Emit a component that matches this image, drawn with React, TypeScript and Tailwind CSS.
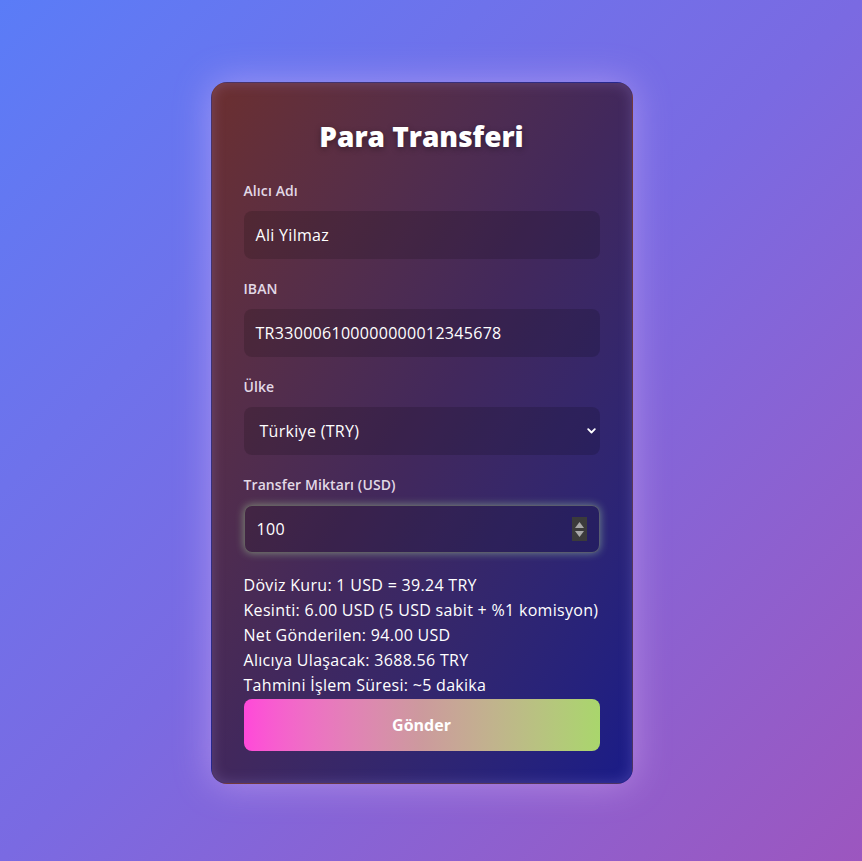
import React from "react";

const font = { fontFamily: '"Open Sans", "Noto Sans", sans-serif' };

function Label({ children }: { children: React.ReactNode }) {
  return <div className="mb-[10px] h-5 text-[14px] font-semibold leading-5 tracking-[0.1px] text-[#e2d9e6]">{children}</div>;
}

function Field({ label, children }: { label: string; children: React.ReactNode }) {
  return (
    <div className="mb-5">
      <Label>{label}</Label>
      {children}
    </div>
  );
}

export default function App() {
  return (
    <div
      className="flex min-h-[861px] w-full items-start justify-center bg-gradient-to-br from-[#5a7cf7] via-[#7a6ae2] to-[#9c56bf] pr-[19px] pt-[82px]"
      style={font}
    >
      <div className="w-[422px] rounded-2xl border border-white/5 bg-gradient-to-br from-[#6c2f2f] via-[#42285c] to-[#1a1b88] px-8 pb-8 pt-8 shadow-[0_0_36px_rgba(240,200,255,0.4),inset_0_0_14px_rgba(190,170,255,0.22)]">
        <h1 className="mb-6 text-center text-[28px] font-extrabold leading-[42px] text-white [text-shadow:0_2px_6px_rgba(0,0,0,0.35)]">
          Para Transferi
        </h1>

        <Field label="Alıcı Adı">
          <div className="flex h-12 items-center rounded-lg bg-black/15 px-3 text-base tracking-[0.3px] text-white">Ali Yilmaz</div>
        </Field>

        <Field label="IBAN">
          <div className="flex h-12 items-center rounded-lg bg-black/15 px-3 text-base tracking-[0.3px] text-white">
            TR330006100000000012345678
          </div>
        </Field>

        <Field label="Ülke">
          <div className="flex h-12 items-center justify-between rounded-lg bg-black/15 pl-4 pr-1 text-base tracking-[0.3px] text-white">
            <span>Türkiye (TRY)</span>
            <svg width="9" height="6" viewBox="0 0 9 6" fill="none">
              <path d="M1.2 1.2 L4.5 4.5 L7.8 1.2" stroke="white" strokeWidth="1.8" strokeLinecap="round" strokeLinejoin="round" />
            </svg>
          </div>
        </Field>

        <div>
          <Label>Transfer Miktarı (USD)</Label>
          <div className="flex h-12 items-center justify-between rounded-lg border border-[#8a9a80]/50 bg-black/15 pl-3 pr-3 text-base tracking-[0.3px] text-white shadow-[0_0_8px_rgba(190,255,170,0.45)]">
            <span>100</span>
            <div className="flex h-6 w-[15px] flex-col items-center justify-center gap-[3px] bg-[#3b3b3b]">
              <svg width="9" height="6" viewBox="0 0 9 6">
                <path d="M4.5 0 L9 6 L0 6 Z" fill="#a8a8a8" />
              </svg>
              <svg width="9" height="6" viewBox="0 0 9 6">
                <path d="M0 0 L9 0 L4.5 6 Z" fill="#a8a8a8" />
              </svg>
            </div>
          </div>
        </div>

        <div className="mt-5 text-base leading-[25px] tracking-[0.3px] text-white">
          <div>Döviz Kuru: 1 USD = 39.24 TRY</div>
          <div>Kesinti: 6.00 USD (5 USD sabit + %1 komisyon)</div>
          <div>Net Gönderilen: 94.00 USD</div>
          <div>Alıcıya Ulaşacak: 3688.56 TRY</div>
          <div>Tahmini İşlem Süresi: ~5 dakika</div>
        </div>

        <button className="mt-px flex h-[52px] w-full items-center justify-center rounded-lg bg-gradient-to-r from-[#ff48d9] via-[#cc9a9d] to-[#a9d66c] text-base font-bold text-white">
          Gönder
        </button>
      </div>
    </div>
  );
}
